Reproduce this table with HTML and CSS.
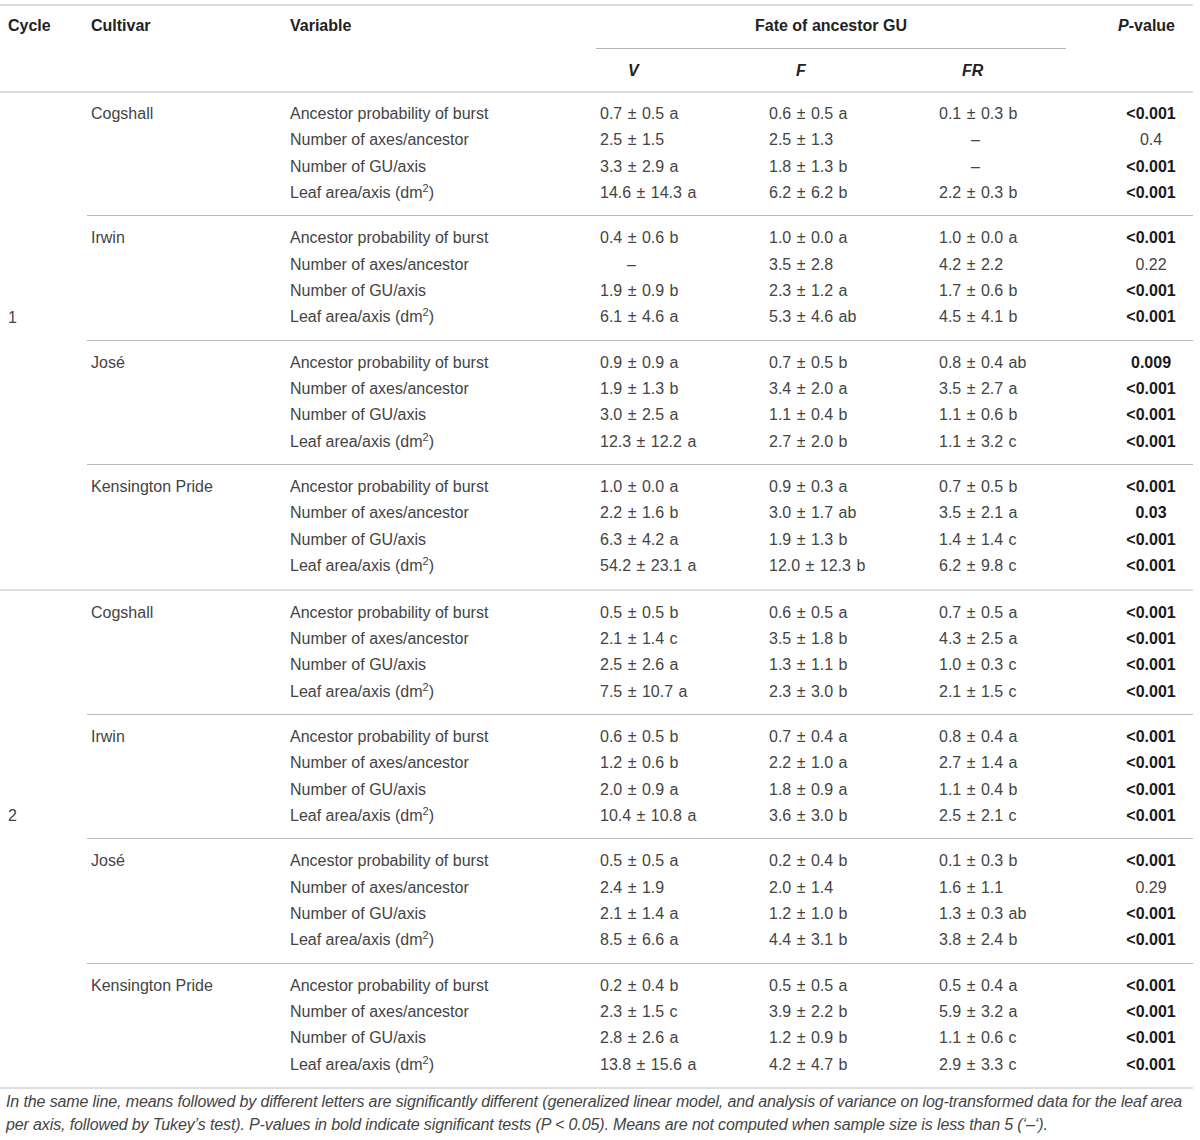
FILE: index.html
```html
<!DOCTYPE html>
<html>
<head>
<meta charset="utf-8">
<link rel="stylesheet" href="styles.css">
</head>
<body>
<table class="tbl">
  <colgroup>
    <col class="c-cycle"><col class="c-cult"><col class="c-var"><col class="c-v"><col class="c-f"><col class="c-fr"><col class="c-p">
  </colgroup>
  <thead>
    <tr class="h1">
      <th class="l cy">Cycle</th>
      <th class="l">Cultivar</th>
      <th class="l">Variable</th>
      <th colspan="3" class="fate"><div class="fate-in">Fate of ancestor GU</div></th>
      <th class="pv"><i>P</i>-value</th>
    </tr>
    <tr class="h2">
      <th></th><th></th><th></th>
      <th class="sub sv"><i>V</i></th>
      <th class="sub sf"><i>F</i></th>
      <th class="sub sfr"><i>FR</i></th>
      <th></th>
    </tr>
  </thead>
  <tbody class="cyc">
    <tr class="first g1"><td rowspan="16" class="cycle">1</td><td class="cult">Cogshall</td><td>Ancestor probability of burst</td><td class="n">0.7 ± 0.5 a</td><td class="n">0.6 ± 0.5 a</td><td class="n">0.1 ± 0.3 b</td><td class="p b">&lt;0.001</td></tr>
    <tr><td></td><td>Number of axes/ancestor</td><td class="n">2.5 ± 1.5</td><td class="n">2.5 ± 1.3</td><td class="dfr">–</td><td class="p">0.4</td></tr>
    <tr><td></td><td>Number of GU/axis</td><td class="n">3.3 ± 2.9 a</td><td class="n">1.8 ± 1.3 b</td><td class="dfr">–</td><td class="p b">&lt;0.001</td></tr>
    <tr class="last"><td></td><td>Leaf area/axis (dm<sup>2</sup>)</td><td class="n">14.6 ± 14.3 a</td><td class="n">6.2 ± 6.2 b</td><td class="n">2.2 ± 0.3 b</td><td class="p b">&lt;0.001</td></tr>

    <tr class="first"><td class="cult">Irwin</td><td>Ancestor probability of burst</td><td class="n">0.4 ± 0.6 b</td><td class="n">1.0 ± 0.0 a</td><td class="n">1.0 ± 0.0 a</td><td class="p b">&lt;0.001</td></tr>
    <tr><td></td><td>Number of axes/ancestor</td><td class="dv">–</td><td class="n">3.5 ± 2.8</td><td class="n">4.2 ± 2.2</td><td class="p">0.22</td></tr>
    <tr><td></td><td>Number of GU/axis</td><td class="n">1.9 ± 0.9 b</td><td class="n">2.3 ± 1.2 a</td><td class="n">1.7 ± 0.6 b</td><td class="p b">&lt;0.001</td></tr>
    <tr class="last"><td></td><td>Leaf area/axis (dm<sup>2</sup>)</td><td class="n">6.1 ± 4.6 a</td><td class="n">5.3 ± 4.6 ab</td><td class="n">4.5 ± 4.1 b</td><td class="p b">&lt;0.001</td></tr>

    <tr class="first"><td class="cult">José</td><td>Ancestor probability of burst</td><td class="n">0.9 ± 0.9 a</td><td class="n">0.7 ± 0.5 b</td><td class="n">0.8 ± 0.4 ab</td><td class="p b">0.009</td></tr>
    <tr><td></td><td>Number of axes/ancestor</td><td class="n">1.9 ± 1.3 b</td><td class="n">3.4 ± 2.0 a</td><td class="n">3.5 ± 2.7 a</td><td class="p b">&lt;0.001</td></tr>
    <tr><td></td><td>Number of GU/axis</td><td class="n">3.0 ± 2.5 a</td><td class="n">1.1 ± 0.4 b</td><td class="n">1.1 ± 0.6 b</td><td class="p b">&lt;0.001</td></tr>
    <tr class="last"><td></td><td>Leaf area/axis (dm<sup>2</sup>)</td><td class="n">12.3 ± 12.2 a</td><td class="n">2.7 ± 2.0 b</td><td class="n">1.1 ± 3.2 c</td><td class="p b">&lt;0.001</td></tr>

    <tr class="first"><td class="cult">Kensington Pride</td><td>Ancestor probability of burst</td><td class="n">1.0 ± 0.0 a</td><td class="n">0.9 ± 0.3 a</td><td class="n">0.7 ± 0.5 b</td><td class="p b">&lt;0.001</td></tr>
    <tr><td></td><td>Number of axes/ancestor</td><td class="n">2.2 ± 1.6 b</td><td class="n">3.0 ± 1.7 ab</td><td class="n">3.5 ± 2.1 a</td><td class="p b">0.03</td></tr>
    <tr><td></td><td>Number of GU/axis</td><td class="n">6.3 ± 4.2 a</td><td class="n">1.9 ± 1.3 b</td><td class="n">1.4 ± 1.4 c</td><td class="p b">&lt;0.001</td></tr>
    <tr class="lastc"><td></td><td>Leaf area/axis (dm<sup>2</sup>)</td><td class="n">54.2 ± 23.1 a</td><td class="n">12.0 ± 12.3 b</td><td class="n">6.2 ± 9.8 c</td><td class="p b">&lt;0.001</td></tr>
  </tbody>
  <tbody class="cyc">
    <tr class="first"><td rowspan="16" class="cycle">2</td><td class="cult">Cogshall</td><td>Ancestor probability of burst</td><td class="n">0.5 ± 0.5 b</td><td class="n">0.6 ± 0.5 a</td><td class="n">0.7 ± 0.5 a</td><td class="p b">&lt;0.001</td></tr>
    <tr><td></td><td>Number of axes/ancestor</td><td class="n">2.1 ± 1.4 c</td><td class="n">3.5 ± 1.8 b</td><td class="n">4.3 ± 2.5 a</td><td class="p b">&lt;0.001</td></tr>
    <tr><td></td><td>Number of GU/axis</td><td class="n">2.5 ± 2.6 a</td><td class="n">1.3 ± 1.1 b</td><td class="n">1.0 ± 0.3 c</td><td class="p b">&lt;0.001</td></tr>
    <tr class="last"><td></td><td>Leaf area/axis (dm<sup>2</sup>)</td><td class="n">7.5 ± 10.7 a</td><td class="n">2.3 ± 3.0 b</td><td class="n">2.1 ± 1.5 c</td><td class="p b">&lt;0.001</td></tr>

    <tr class="first"><td class="cult">Irwin</td><td>Ancestor probability of burst</td><td class="n">0.6 ± 0.5 b</td><td class="n">0.7 ± 0.4 a</td><td class="n">0.8 ± 0.4 a</td><td class="p b">&lt;0.001</td></tr>
    <tr><td></td><td>Number of axes/ancestor</td><td class="n">1.2 ± 0.6 b</td><td class="n">2.2 ± 1.0 a</td><td class="n">2.7 ± 1.4 a</td><td class="p b">&lt;0.001</td></tr>
    <tr><td></td><td>Number of GU/axis</td><td class="n">2.0 ± 0.9 a</td><td class="n">1.8 ± 0.9 a</td><td class="n">1.1 ± 0.4 b</td><td class="p b">&lt;0.001</td></tr>
    <tr class="last"><td></td><td>Leaf area/axis (dm<sup>2</sup>)</td><td class="n">10.4 ± 10.8 a</td><td class="n">3.6 ± 3.0 b</td><td class="n">2.5 ± 2.1 c</td><td class="p b">&lt;0.001</td></tr>

    <tr class="first"><td class="cult">José</td><td>Ancestor probability of burst</td><td class="n">0.5 ± 0.5 a</td><td class="n">0.2 ± 0.4 b</td><td class="n">0.1 ± 0.3 b</td><td class="p b">&lt;0.001</td></tr>
    <tr><td></td><td>Number of axes/ancestor</td><td class="n">2.4 ± 1.9</td><td class="n">2.0 ± 1.4</td><td class="n">1.6 ± 1.1</td><td class="p">0.29</td></tr>
    <tr><td></td><td>Number of GU/axis</td><td class="n">2.1 ± 1.4 a</td><td class="n">1.2 ± 1.0 b</td><td class="n">1.3 ± 0.3 ab</td><td class="p b">&lt;0.001</td></tr>
    <tr class="last"><td></td><td>Leaf area/axis (dm<sup>2</sup>)</td><td class="n">8.5 ± 6.6 a</td><td class="n">4.4 ± 3.1 b</td><td class="n">3.8 ± 2.4 b</td><td class="p b">&lt;0.001</td></tr>

    <tr class="first"><td class="cult">Kensington Pride</td><td>Ancestor probability of burst</td><td class="n">0.2 ± 0.4 b</td><td class="n">0.5 ± 0.5 a</td><td class="n">0.5 ± 0.4 a</td><td class="p b">&lt;0.001</td></tr>
    <tr><td></td><td>Number of axes/ancestor</td><td class="n">2.3 ± 1.5 c</td><td class="n">3.9 ± 2.2 b</td><td class="n">5.9 ± 3.2 a</td><td class="p b">&lt;0.001</td></tr>
    <tr><td></td><td>Number of GU/axis</td><td class="n">2.8 ± 2.6 a</td><td class="n">1.2 ± 0.9 b</td><td class="n">1.1 ± 0.6 c</td><td class="p b">&lt;0.001</td></tr>
    <tr class="lastc"><td></td><td>Leaf area/axis (dm<sup>2</sup>)</td><td class="n">13.8 ± 15.6 a</td><td class="n">4.2 ± 4.7 b</td><td class="n">2.9 ± 3.3 c</td><td class="p b">&lt;0.001</td></tr>
  </tbody>
</table>
<p class="note">In the same line, means followed by different letters are significantly different (generalized linear model, and analysis of variance on log-transformed data for the leaf area<br>per axis, followed by Tukey’s test). P-values in bold indicate significant tests (P &lt; 0.05). Means are not computed when sample size is less than 5 (‘–‘).</p>
</body>
</html>
```

FILE: styles.css
```css
html, body {
  margin: 0;
  padding: 0;
  background: #fff;
}
body {
  font-family: "Liberation Sans", Arial, sans-serif;
  color: #444;
}
.tbl {
  width: 1193px;
  table-layout: fixed;
  border-collapse: collapse;
  margin-top: 4px;
  font-size: 16px;
}
.c-cycle { width: 87px; }
.c-cult { width: 199px; }
.c-var { width: 310px; }
.c-v { width: 169px; }
.c-f { width: 170px; }
.c-fr { width: 170px; }
.c-p { width: 88px; }

thead tr.h1 th {
  border-top: 2px solid #dedede;
}
th {
  font-weight: bold;
  color: #222;
  text-align: left;
  padding: 10px 0 0 4px;
  line-height: 20px;
  vertical-align: top;
}
th.cy { padding-left: 8px; }
th.pv {
  text-align: right;
  padding-right: 18px;
}
th.fate {
  padding: 10px 0 0 0;
}
.fate-in {
  margin: 0 39px 0 0;
  text-align: center;
  padding-bottom: 12px;
  border-bottom: 1px solid #b5b5b5;
}
tr.h2 th {
  padding-top: 12px;
  padding-bottom: 10px;
  border-bottom: 2px solid #dedede;
}
tr.h2 th.sv { padding-left: 32px; }
tr.h2 th.sf { padding-left: 31px; }
tr.h2 th.sfr { padding-left: 27px; }

td {
  padding: 0 0 0 4px;
  line-height: 26.35px;
  height: 26.35px;
  vertical-align: middle;
  white-space: nowrap;
}
td.n { word-spacing: 1px; }
tr.first td { padding-top: 9px; }
tr.first.g1 td { padding-top: 8px; }
tr.last td, tr.lastc td { padding-bottom: 9px; }
tr.first td.cycle { padding-top: 0; }
tr.last td { border-bottom: 1px solid #b8b8b8; }
tr.lastc td { border-bottom: 2px solid #dedede; }
td.cycle {
  padding: 0 0 46px 8px;
  vertical-align: middle;
  border-bottom: 2px solid #dedede;
}
td.cult { vertical-align: top; }
td.dv { padding-left: 31px; }
td.dfr { padding-left: 36px; }
td.p {
  text-align: center;
  padding-left: 4px;
}
td.b {
  font-weight: bold;
  color: #1a1a1a;
}
sup {
  font-size: 11px;
  line-height: 0;
  vertical-align: 6px;
}
.note {
  margin: 0;
  padding: 1px 0 0 6px;
  font-style: italic;
  font-size: 16px;
  line-height: 23px;
  color: #444;
  white-space: nowrap;
  letter-spacing: -0.12px;
}
```
